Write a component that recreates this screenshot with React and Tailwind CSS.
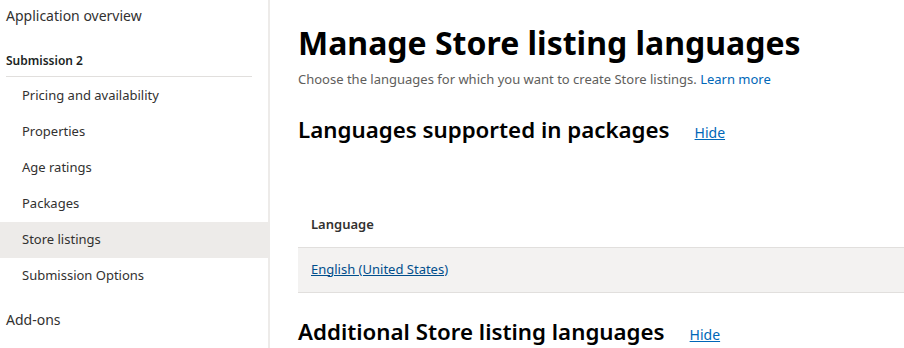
const navItems = [
  "Pricing and availability",
  "Properties",
  "Age ratings",
  "Packages",
  "Store listings",
  "Submission Options",
];

const Sidebar = () => {
  return (
    <aside className="w-[270px] shrink-0 border-r-2 border-[#edebe9] h-[348px]">
      <div className="px-[6px] h-[30px] flex items-center text-[14px] text-[#323130]">
        Application overview
      </div>
      {/* submission group */}
      <div className="mt-[17px] mx-[6px] pb-[5px] border-b border-[#e1dfdd] mr-[16px]">
        <span className="text-[12px] font-semibold text-[#201f1e]">Submission 2</span>
      </div>
      <ul className="mt-px">
        {navItems.map((name, index) => {
          return (
            <li
              key={index}
              className={
                "h-[36px] flex items-center pl-[22px] text-[13px] text-[#323130] " +
                (name === "Store listings" ? "bg-[#edebe9]" : "")
              }
            >
              {name}
            </li>
          );
        })}
      </ul>
      <div className="mt-[8px] px-[6px] h-[34px] flex items-center text-[14px] text-[#323130]">
        Add-ons
      </div>
    </aside>
  );
};

const SectionTitle = ({ title }) => {
  return (
    <div className="flex items-baseline gap-[25px]">
      <h2 className="text-[22.3px] font-semibold text-black leading-[32px]">{title}</h2>
      <a className="text-[14px] text-[#0067b8] underline cursor-pointer">Hide</a>
    </div>
  );
};

export default function App() {
  return (
    <div
      className="flex bg-white h-[348px] w-[904px] overflow-hidden"
      style={{ fontFamily: '"Noto Sans", "Open Sans", sans-serif' }}
    >
      <Sidebar />
      <main className="flex-1 pl-[28px] pt-[19px]">
        <h1 className="text-[32px] font-bold leading-[48px] text-black">
          Manage Store listing languages
        </h1>
        <p className="text-[13px] text-[#605e5c] mt-[3px]">
          Choose the languages for which you want to create Store listings.{" "}
          <a className="text-[#0067b8] cursor-pointer">Learn more</a>
        </p>
        <div className="mt-[24px]">
          <SectionTitle title="Languages supported in packages" />
        </div>
        {/* table */}
        <div className="mt-[57px]">
          <div className="h-[44px] flex items-center px-[13px] text-[13px] font-semibold text-[#323130]">
            Language
          </div>
          <div className="h-[46px] flex items-center px-[13px] bg-[#f3f2f1] border-y border-[#e1dfdd]">
            <a className="text-[13px] text-[#004e8c] underline cursor-pointer">
              English (United States)
            </a>
          </div>
        </div>
        <div className="mt-[23px]">
          <SectionTitle title="Additional Store listing languages" />
        </div>
      </main>
    </div>
  );
}
